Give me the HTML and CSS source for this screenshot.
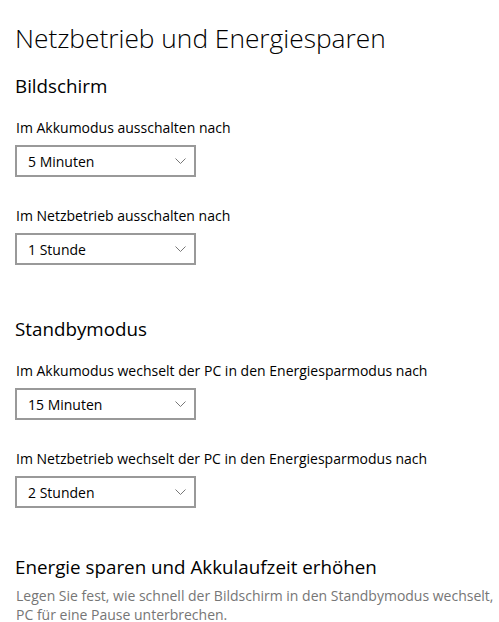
FILE: index.html
```html
<!DOCTYPE html>
<html lang="de">
<head>
<meta charset="utf-8">
<title>Netzbetrieb und Energiesparen</title>
<link rel="stylesheet" href="styles.css">
</head>
<body>
<main class="page">
  <h1 class="title">Netzbetrieb und Energiesparen</h1>

  <section class="group">
    <h2 class="group-title">Bildschirm</h2>
    <div class="field">
      <div class="field-label">Im Akkumodus ausschalten nach</div>
      <div class="select"><span class="select-value">5 Minuten</span><svg class="chevron" width="11" height="6" viewBox="0 0 11 6"><path d="M0.5 0.5 L5.5 5.5 L10.5 0.5" fill="none" stroke="#777" stroke-width="1"/></svg></div>
    </div>
    <div class="field">
      <div class="field-label">Im Netzbetrieb ausschalten nach</div>
      <div class="select"><span class="select-value">1 Stunde</span><svg class="chevron" width="11" height="6" viewBox="0 0 11 6"><path d="M0.5 0.5 L5.5 5.5 L10.5 0.5" fill="none" stroke="#777" stroke-width="1"/></svg></div>
    </div>
  </section>

  <section class="group">
    <h2 class="group-title">Standbymodus</h2>
    <div class="field">
      <div class="field-label">Im Akkumodus wechselt der PC in den Energiesparmodus nach</div>
      <div class="select"><span class="select-value">15 Minuten</span><svg class="chevron" width="11" height="6" viewBox="0 0 11 6"><path d="M0.5 0.5 L5.5 5.5 L10.5 0.5" fill="none" stroke="#777" stroke-width="1"/></svg></div>
    </div>
    <div class="field">
      <div class="field-label">Im Netzbetrieb wechselt der PC in den Energiesparmodus nach</div>
      <div class="select"><span class="select-value">2 Stunden</span><svg class="chevron" width="11" height="6" viewBox="0 0 11 6"><path d="M0.5 0.5 L5.5 5.5 L10.5 0.5" fill="none" stroke="#777" stroke-width="1"/></svg></div>
    </div>
  </section>

  <section class="group group-info">
    <h2 class="group-title">Energie sparen und Akkulaufzeit erhöhen</h2>
    <p class="desc">Legen Sie fest, wie schnell der Bildschirm in den Standbymodus wechselt,<br>PC für eine Pause unterbrechen.</p>
  </section>
</main>
</body>
</html>
```
FILE: styles.css
```css
html, body {
  margin: 0;
  padding: 0;
  background: #fff;
  overflow: hidden;
}
body {
  font-family: "Open Sans", "Noto Sans", sans-serif;
  color: #000;
  width: 499px;
  height: 622px;
}
.page {
  padding: 20px 0 0 15px;
}
.title {
  margin: 0;
  font-weight: 300;
  font-size: 26.3px;
  line-height: 36px;
}
.group {
  margin-top: 17px;
}
.group + .group {
  margin-top: 51px;
}
.group + .group-info {
  margin-top: 46px;
}
.group-title {
  margin: 0;
  font-weight: 400;
  font-size: 18.8px;
  line-height: 26px;
}
.field {
  margin-top: 19px;
}
.field + .field {
  margin-top: 29px;
}
.field-label {
  font-size: 14px;
  line-height: 20px;
  margin-left: 1px;
}
.select {
  margin-top: 7px;
  box-sizing: border-box;
  width: 181px;
  height: 32px;
  border: 2px solid #999;
  display: flex;
  align-items: center;
  justify-content: space-between;
  padding: 0 8px 0 11px;
}
.select-value {
  font-size: 14px;
}
.chevron {
  display: block;
}
.desc {
  margin: 6px 0 0 1px;
  width: 600px;
  white-space: nowrap;
  font-size: 14px;
  line-height: 19px;
  color: #767676;
}
```
